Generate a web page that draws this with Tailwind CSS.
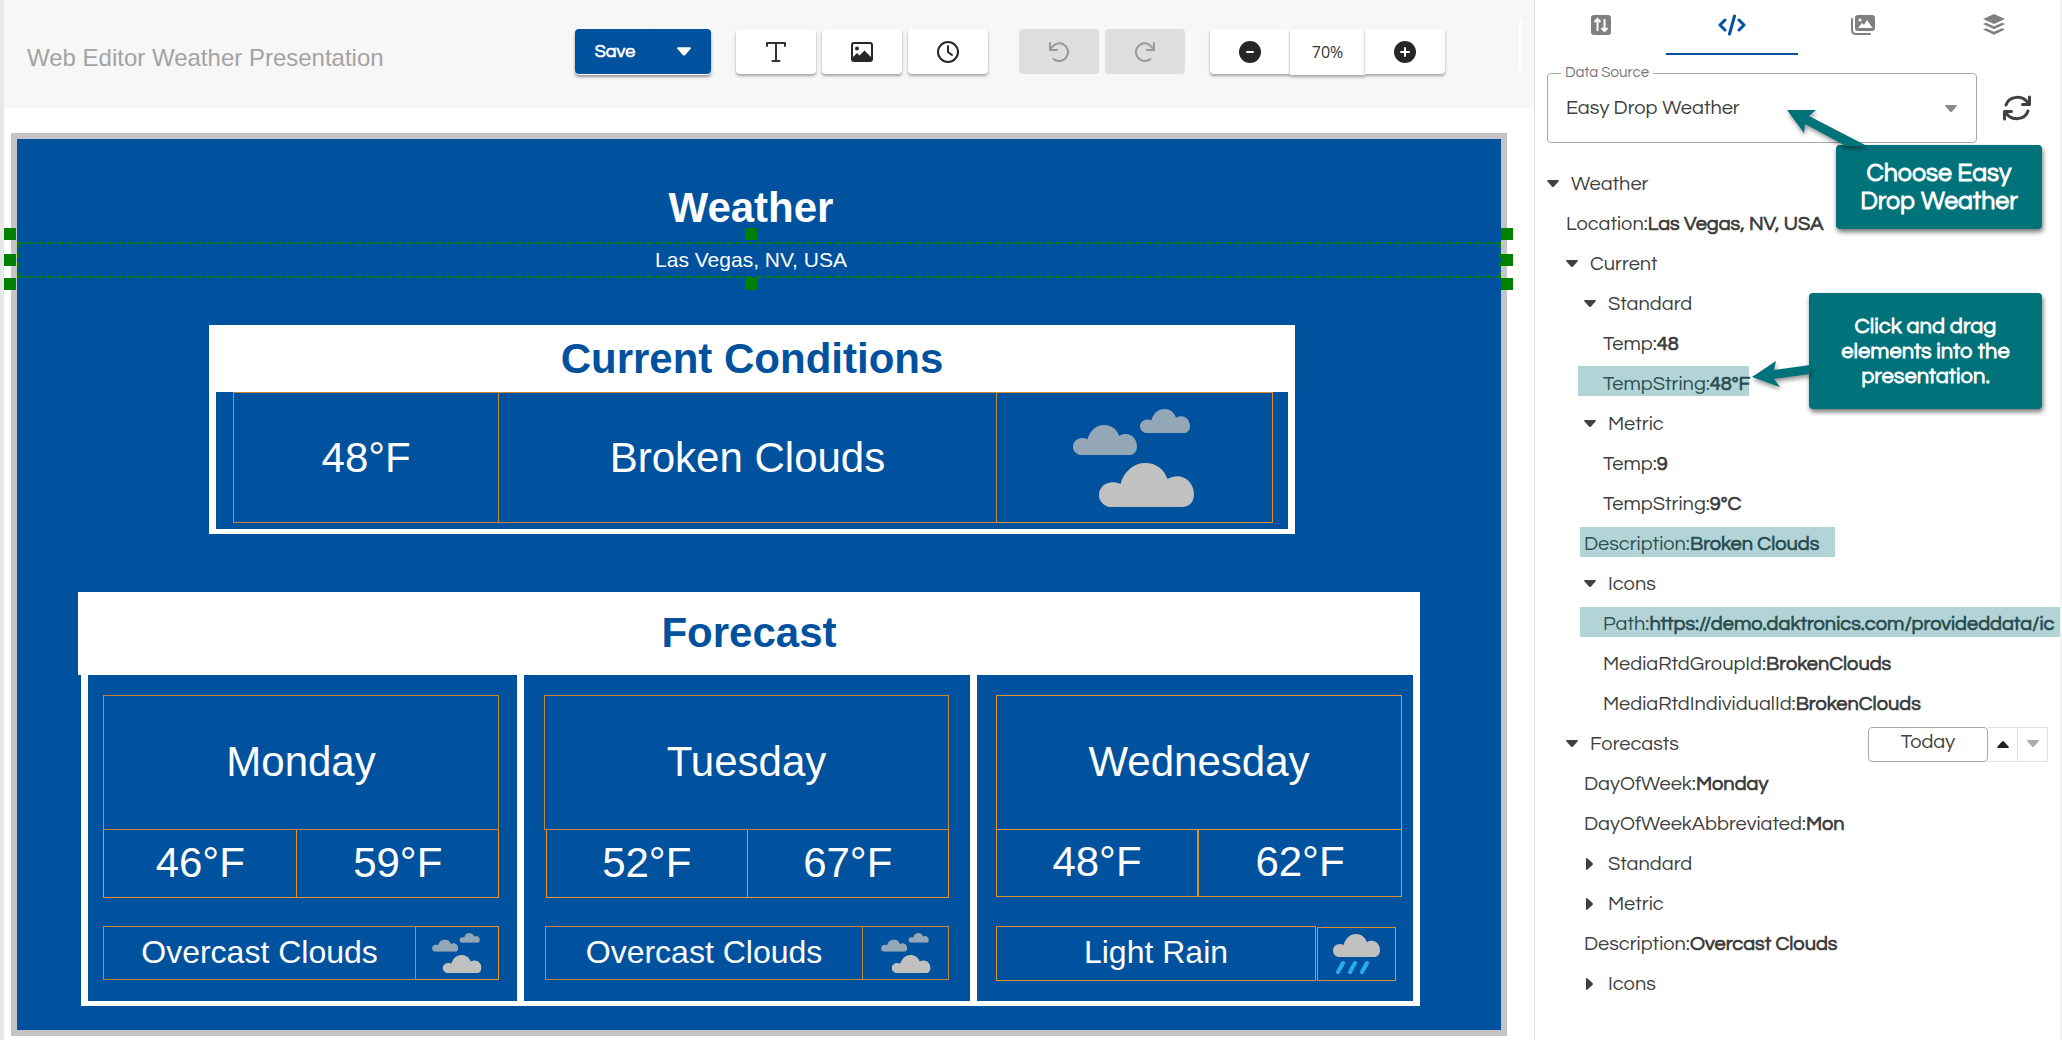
<!DOCTYPE html>
<html lang="en">
<head>
    <meta charset="UTF-8">
    <meta name="viewport" content="width=device-width, initial-scale=1.0">
    <title>Web Editor Weather Presentation</title>
    <script src="https://cdn.jsdelivr.net/npm/@tailwindcss/browser@4"></script>
</head>
<body class="bg-white text-[#404040] font-['Questrial','Open_Sans',sans-serif]">
    <!-- Shared icons -->
    <svg class="hidden">
        <symbol id="cloud" viewBox="0 0 95 44" preserveAspectRatio="none">
            <path d="M10 44C4 42 0 38 0 32C0 22 11 16 21.5 21C25 8 35 0 46 0C57 0 65 6 68.5 16C82 8 95 18 95 31C95 38 91 44 83 44Z"/>
        </symbol>
        <symbol id="broken-clouds" viewBox="0 0 122 98">
            <use href="#cloud" x="0" y="16" width="64" height="30" fill="#93a7b7"/>
            <use href="#cloud" x="67" y="0" width="50" height="24" fill="#93a7b7"/>
            <use href="#cloud" x="26" y="54" width="95" height="44" fill="#c1c1c1"/>
        </symbol>
        <symbol id="light-rain" viewBox="0 0 47 40">
            <use href="#cloud" x="0" y="0" width="47" height="23" fill="#c1c1c1"/>
            <path d="M10 29L5 38M22 29L17 38M34 29L29 38" stroke="#2baaf2" stroke-width="4" stroke-linecap="round"/>
        </symbol>
        <symbol id="caret-down" viewBox="0 0 12 8">
            <path d="M1 0H11Q12.500 .3 11.500 1.500L7 6.500Q6 7.500 5 6.500L.5 1.500Q-.5 .3 1 0Z"/>
        </symbol>
        <symbol id="caret-right" viewBox="0 0 12 12">
            <path d="M2 1Q2.200 -.5 3.500 .5L8.500 5Q9.500 6 8.500 7L3.500 11.500Q2.200 12.500 2 11Z"/>
        </symbol>
    </svg>

    <div class="flex min-h-screen border-l-4 border-[#e8e8e8]">
        <main class="flex-1 min-w-0">
            <!-- Toolbar -->
            <header class="h-[108px] bg-[#f7f7f7] flex items-start">
                <input type="text" aria-label="Presentation name" value="Web Editor Weather Presentation" class="w-[548px] shrink-0 ml-[23px] mt-10 h-9 text-[24px] text-[#a3a3a3] font-['Liberation_Sans',sans-serif]">
                <div class="flex gap-[25px] mt-[29px]">
                    <div class="flex text-white shadow-[0_2px_3px_rgba(0,0,0,0.4)] rounded">
                        <button class="w-[81px] h-[45px] bg-[#00529f] rounded-l border-r border-[#004a90] font-bold text-[18px]">Save</button>
                        <button aria-label="More save options" class="w-[55px] h-[45px] bg-[#00529f] rounded-r flex items-center justify-center"><svg class="w-3.5 h-2.5 fill-white"><use href="#caret-down"/></svg></button>
                    </div>
                    <div class="flex gap-[6px]">
                        <button aria-label="Add text" class="w-20 h-[45px] bg-white rounded shadow-[0_2px_3px_rgba(0,0,0,0.35)] flex items-center justify-center">
                            <svg viewBox="0 0 20 20" class="w-5 h-5" fill="none" stroke="#333" stroke-width="2" stroke-linecap="round" stroke-linejoin="round"><path d="M1 4V1H19V4M10 1V19M6.500 19H13.500"/></svg>
                        </button>
                        <button aria-label="Add image" class="w-20 h-[45px] bg-white rounded shadow-[0_2px_3px_rgba(0,0,0,0.35)] flex items-center justify-center">
                            <svg viewBox="0 0 22 20" class="w-[22px] h-5"><rect x="1" y="1" width="20" height="18" rx="2" fill="none" stroke="#272727" stroke-width="2"/><circle cx="6" cy="6.500" r="2" fill="#272727"/><path d="M2 18V15L6 11L8.500 13.500L13.500 8.500L20 15V18Z" fill="#272727"/></svg>
                        </button>
                        <button aria-label="Add clock" class="w-20 h-[45px] bg-white rounded shadow-[0_2px_3px_rgba(0,0,0,0.35)] flex items-center justify-center">
                            <svg viewBox="0 0 22 22" class="w-[22px] h-[22px]" fill="none" stroke="#272727" stroke-width="2" stroke-linecap="round" stroke-linejoin="round"><circle cx="11" cy="11" r="10"/><path d="M11 5V11L15 14"/></svg>
                        </button>
                    </div>
                    <div class="flex gap-[6px] ml-[6px]">
                        <button disabled aria-label="Undo" class="w-20 h-[45px] bg-[#dedede] rounded flex items-center justify-center">
                            <svg viewBox="0 0 20 20" class="w-5 h-5" fill="none" stroke="#999" stroke-width="2" stroke-linecap="round" stroke-linejoin="round"><path d="M1 1V8H8M1.500 7.500C4 3 7 1 11 1.200A8.900 8.900 0 1 1 4.500 17"/></svg>
                        </button>
                        <button disabled aria-label="Redo" class="w-20 h-[45px] bg-[#dedede] rounded flex items-center justify-center">
                            <svg viewBox="0 0 20 20" class="w-5 h-5" fill="none" stroke="#999" stroke-width="2" stroke-linecap="round" stroke-linejoin="round"><path d="M19 1V8H12M18.500 7.500C16 3 13 1 9 1.200A8.900 8.900 0 1 0 15.500 17"/></svg>
                        </button>
                    </div>
                    <div class="flex">
                        <button aria-label="Zoom out" class="w-20 h-[45px] bg-white rounded-l shadow-[0_2px_3px_rgba(0,0,0,0.35)] flex items-center justify-center">
                            <svg viewBox="0 0 22 22" class="w-[22px] h-[22px]"><circle cx="11" cy="11" r="11" fill="#272727"/><path d="M8 11H14" stroke="#fff" stroke-width="2" stroke-linecap="round"/></svg>
                        </button>
                        <output class="w-[75px] h-[46px] bg-white shadow-[0_2px_3px_rgba(0,0,0,0.35)] flex items-center justify-center text-[16px] text-[#333] font-['Open_Sans',sans-serif]">70%</output>
                        <button aria-label="Zoom in" class="w-20 h-[45px] bg-white rounded-r shadow-[0_2px_3px_rgba(0,0,0,0.35)] flex items-center justify-center">
                            <svg viewBox="0 0 22 22" class="w-[22px] h-[22px]"><circle cx="11" cy="11" r="11" fill="#272727"/><path d="M7 11H15M11 7V15" stroke="#fff" stroke-width="2" stroke-linecap="round"/></svg>
                        </button>
                    </div>
                </div>
                <div class="ml-auto mr-3 mt-5 w-[3px] h-[50px] bg-white"></div>
            </header>

            <!-- Slide -->
            <section class="mt-[25px] ml-[7px] mr-[27px] mb-[5px] border-6 border-[#c4c4c4] bg-[#00529f] text-white text-[42px] leading-[48px] text-center font-['Liberation_Sans',sans-serif]">
                <h1 class="pt-[45px] pr-4 font-bold">Weather</h1>

                <!-- Selected text box with its resize handles -->
                <div class="relative mt-[10px] h-9 pr-4 border-2 border-dashed border-[#008000] text-[21px] leading-8">
                    Las Vegas, NV, USA
                    <i class="absolute -left-[15px] -top-4 w-3 h-3 bg-[#008000]"></i>
                    <i class="absolute -left-[15px] top-[10px] w-3 h-3 bg-[#008000]"></i>
                    <i class="absolute -left-[15px] -bottom-[14px] w-3 h-3 bg-[#008000]"></i>
                    <i class="absolute left-[726px] -top-4 w-3 h-3 bg-[#008000]"></i>
                    <i class="absolute left-[726px] -bottom-[14px] w-3 h-3 bg-[#008000]"></i>
                    <i class="absolute -right-[14px] -top-4 w-3 h-3 bg-[#008000]"></i>
                    <i class="absolute -right-[14px] top-[10px] w-3 h-3 bg-[#008000]"></i>
                    <i class="absolute -right-[14px] -bottom-[14px] w-3 h-3 bg-[#008000]"></i>
                </div>

                <!-- Current conditions -->
                <div class="mt-[47px] ml-[192px] mr-[206px]">
                    <h2 class="h-[67px] bg-white text-[#00529f] font-bold leading-[67px]">Current Conditions</h2>
                    <div class="border-x-7 border-b-5 border-white pl-[17px] pr-[15px] pb-[6px] grid grid-cols-[266fr_497fr_276fr] leading-[129px]">
                        <div class="h-[131px] border border-[#c4873a]">48°F</div>
                        <div class="h-[131px] border-y border-r border-[#c4873a]">Broken Clouds</div>
                        <div class="h-[131px] border-y border-r border-[#d98f35] flex items-center justify-center"><svg class="w-[122px] h-[98px]"><use href="#broken-clouds"/></svg></div>
                    </div>
                </div>

                <!-- Forecast -->
                <div class="mt-[58px] ml-[61px] mr-[81px] pb-6">
                    <h2 class="h-[83px] bg-white text-[#00529f] font-bold leading-[82px]">Forecast</h2>
                    <div class="ml-[3px] border-x-7 border-b-5 border-white grid grid-cols-[429fr_453fr_443fr]">
                        <div class="pt-5 pb-5 pl-[15px] pr-[18px]">
                            <div class="h-[135px] border border-[#c4873a] leading-[132px]">Monday</div>
                            <div class="grid grid-cols-[194fr_201fr] leading-[66px]">
                                <div class="h-[68px] border-x border-b border-[#e8942c]">46°F</div>
                                <div class="h-[68px] border-r border-b border-[#e8942c]">59°F</div>
                            </div>
                            <div class="mt-7 flex text-[32px] leading-[50px]">
                                <div class="flex-1 h-[54px] border border-[#c4873a]">Overcast Clouds</div>
                                <div class="w-[83px] h-[54px] border-y border-r border-[#e8942c] flex items-center justify-center"><svg class="w-[50px] h-10"><use href="#broken-clouds"/></svg></div>
                            </div>
                        </div>
                        <div class="border-l-7 border-white pt-5 pb-5 pl-5 pr-[21px]">
                            <div class="h-[135px] border border-[#c4873a] leading-[132px]">Tuesday</div>
                            <div class="grid grid-cols-2 ml-0.5 leading-[66px]">
                                <div class="h-[68px] border-x border-b border-[#e8942c]">52°F</div>
                                <div class="h-[68px] border-r border-b border-[#e8942c]">67°F</div>
                            </div>
                            <div class="mt-7 ml-px flex text-[32px] leading-[50px]">
                                <div class="flex-1 h-[54px] border border-[#c4873a]">Overcast Clouds</div>
                                <div class="w-[86px] h-[54px] border-y border-r border-[#c4873a] flex items-center justify-center"><svg class="w-[50px] h-10"><use href="#broken-clouds"/></svg></div>
                            </div>
                        </div>
                        <div class="border-l-7 border-white pt-5 pb-5 pl-[19px] pr-[11px]">
                            <div class="h-[135px] border border-[#e8942c] leading-[132px]">Wednesday</div>
                            <div class="grid grid-cols-2 leading-[64px]">
                                <div class="h-[67px] border-l border-r-2 border-b border-[#d98f35]">48°F</div>
                                <div class="h-[67px] border-r border-b border-[#d98f35]">62°F</div>
                            </div>
                            <div class="mt-[29px] pr-[6px] gap-px flex text-[32px] leading-[50px]">
                                <div class="flex-1 h-[55px] border border-[#d98f35]">Light Rain</div>
                                <div class="w-[79px] h-[54px] mt-px border border-[#d98f35] flex items-center justify-center"><svg class="w-[47px] h-10"><use href="#light-rain"/></svg></div>
                            </div>
                        </div>
                    </div>
                </div>
            </section>
        </main>

        <!-- Data sidebar -->
        <aside class="relative w-[528px] shrink-0 overflow-hidden border-l border-r-2 border-l-[#e4e4e4] border-r-[#f3f3f3] text-[20px]">
            <nav class="flex h-[55px]">
                <button aria-label="Properties" class="flex-1 pb-[6px] flex items-center justify-center">
                    <svg viewBox="0 0 20 20" class="w-5 h-5"><rect width="20" height="20" rx="3" fill="#808080"/><path d="M6.500 16V5M3.500 7L6.500 4L9.500 7M13.500 4V15M10.500 13L13.500 16L16.500 13" fill="none" stroke="#fff" stroke-width="2"/></svg>
                </button>
                <button aria-label="Data" class="flex-1 pb-1 border-b-2 border-[#00529f] flex items-center justify-center">
                    <svg viewBox="0 0 28 22" class="w-7 h-[22px]" fill="none" stroke="#00529f" stroke-width="3" stroke-linecap="round" stroke-linejoin="round"><path d="M7 6L2 11L7 16M21 6L26 11L21 16M16.500 2L11.500 20"/></svg>
                </button>
                <button aria-label="Media" class="flex-1 pb-[6px] flex items-center justify-center">
                    <svg viewBox="0 0 24 20" class="w-6 h-5"><path d="M1 4V15Q1 19 5 19H19" fill="none" stroke="#808080" stroke-width="2" stroke-linecap="round"/><rect x="4" width="20" height="16" rx="3" fill="#808080"/><circle cx="9" cy="5" r="1.500" fill="#fff"/><path d="M7 13L11 8L13 10L16 5L21.500 13Z" fill="#fff"/></svg>
                </button>
                <button aria-label="Layers" class="flex-1 pb-[6px] flex items-center justify-center">
                    <svg viewBox="0 0 22 21" class="w-[22px] h-[21px]" fill="#808080"><path d="M11 0L22 5L11 10L0 5ZM0 10L3 8.700L11 12.200L19 8.700L22 10L11 15.200ZM0 15.500L3 14.200L11 17.700L19 14.200L22 15.500L11 20.700Z"/></svg>
                </button>
            </nav>

            <div class="flex items-center mt-[18px] pl-3">
                <div class="relative flex-1 max-w-[430px] h-[70px]">
                    <label for="dataSource" class="absolute left-[14px] -top-[10px] px-1 bg-white text-[15px] leading-5 text-[#777]">Data Source</label>
                    <select id="dataSource" class="w-full h-full appearance-none rounded border border-[#a8a8a8] pl-[18px] bg-transparent">
                        <option>Easy Drop Weather</option>
                    </select>
                    <svg class="absolute right-5 top-8 w-3 h-2 fill-[#8a8a8a] pointer-events-none"><use href="#caret-down"/></svg>
                </div>
                <button aria-label="Refresh" class="ml-[26px]">
                    <svg viewBox="0 0 28 26" class="w-7 h-[26px]" fill="none" stroke="#404040" stroke-width="3" stroke-linecap="round" stroke-linejoin="round"><path d="M3 10C6 1 20 -1 25.500 9M26.500 2V9.500H19.500M25 16C22 25 8 27 2.500 17M1.500 24V16.500H8.500"/></svg>
                </button>
            </div>

            <ul class="mt-[21px] pl-3 leading-10 whitespace-nowrap">
                <li>
                    <button class="h-10 flex items-center gap-3"><svg class="w-3 h-2 fill-[#404040]"><use href="#caret-down"/></svg>Weather</button>
                    <ul class="pl-[19px]">
                        <li class="h-10">Location:<b>Las Vegas, NV, USA</b></li>
                        <li>
                            <button class="h-10 flex items-center gap-3"><svg class="w-3 h-2 fill-[#404040]"><use href="#caret-down"/></svg>Current</button>
                            <ul class="pl-[18px]">
                                <li>
                                    <button class="h-10 flex items-center gap-3"><svg class="w-3 h-2 fill-[#404040]"><use href="#caret-down"/></svg>Standard</button>
                                    <ul class="pl-[19px]">
                                        <li class="h-10">Temp:<b>48</b></li>
                                        <li class="relative h-10">TempString:<b>48°F</b><i class="absolute -left-[25px] top-[2px] w-[171px] h-[30px] bg-[#00727a]/30"></i></li>
                                    </ul>
                                </li>
                                <li>
                                    <button class="h-10 flex items-center gap-3"><svg class="w-3 h-2 fill-[#404040]"><use href="#caret-down"/></svg>Metric</button>
                                    <ul class="pl-[19px]">
                                        <li class="h-10">Temp:<b>9</b></li>
                                        <li class="h-10">TempString:<b>9°C</b></li>
                                    </ul>
                                </li>
                                <li class="relative h-10">Description:<b>Broken Clouds</b><i class="absolute -left-1 top-[3px] w-[255px] h-[30px] bg-[#00727a]/30"></i></li>
                                <li>
                                    <button class="h-10 flex items-center gap-3"><svg class="w-3 h-2 fill-[#404040]"><use href="#caret-down"/></svg>Icons</button>
                                    <ul class="pl-[19px]">
                                        <li class="relative h-10">Path:<b>https://demo.daktronics.com/provideddata/ic</b><i class="absolute -left-[23px] right-0 top-[3px] h-[30px] bg-[#00727a]/30"></i></li>
                                        <li class="h-10">MediaRtdGroupId:<b>BrokenClouds</b></li>
                                        <li class="h-10">MediaRtdIndividualId:<b>BrokenClouds</b></li>
                                    </ul>
                                </li>
                            </ul>
                        </li>
                        <li>
                            <div class="flex items-center pr-3">
                                <button class="h-10 flex items-center gap-3"><svg class="w-3 h-2 fill-[#404040]"><use href="#caret-down"/></svg>Forecasts</button>
                                <input type="text" aria-label="Forecast day" value="Today" readonly class="ml-auto w-[120px] h-[35px] pb-1 rounded border border-[#a8a8a8] text-center">
                                <button aria-label="Next day" class="w-[30px] h-[35px] border-y border-r border-[#e2e2e2] flex items-center justify-center"><svg class="w-3 h-2 fill-[#222] rotate-180"><use href="#caret-down"/></svg></button>
                                <button aria-label="Previous day" disabled class="w-[30px] h-[35px] border-y border-r border-[#e2e2e2] flex items-center justify-center"><svg class="w-3 h-2 fill-[#aaa]"><use href="#caret-down"/></svg></button>
                            </div>
                            <ul class="pl-[18px]">
                                <li class="h-10">DayOfWeek:<b>Monday</b></li>
                                <li class="h-10">DayOfWeekAbbreviated:<b>Mon</b></li>
                                <li><button class="h-10 flex items-center gap-3"><svg class="w-3 h-3 fill-[#404040]"><use href="#caret-right"/></svg>Standard</button></li>
                                <li><button class="h-10 flex items-center gap-3"><svg class="w-3 h-3 fill-[#404040]"><use href="#caret-right"/></svg>Metric</button></li>
                                <li class="h-10">Description:<b>Overcast Clouds</b></li>
                                <li><button class="h-10 flex items-center gap-3"><svg class="w-3 h-3 fill-[#404040]"><use href="#caret-right"/></svg>Icons</button></li>
                            </ul>
                        </li>
                    </ul>
                </li>
            </ul>

            <!-- Callouts -->
            <div class="absolute right-[18px] top-[145px] w-[206px] h-[84px] rounded bg-[#00727a] text-white font-bold text-[25px] leading-7 flex items-center justify-center text-center shadow-[1px_3px_5px_rgba(0,0,0,0.55)]">
                Choose Easy<br>Drop Weather
                <svg viewBox="0 0 80 36" class="absolute -left-[49px] -top-[35px] w-20 h-9 fill-[#00727a] drop-shadow-[1px_3px_2px_rgba(0,0,0,0.4)]"><path d="M0 0L29 0L22 6L80 36H59L18 14L17 23Z"/></svg>
            </div>
            <div class="absolute right-[18px] top-[293px] w-[233px] h-[116px] rounded bg-[#00727a] text-white font-bold text-[22px] leading-[25px] flex items-center justify-center text-center shadow-[1px_3px_5px_rgba(0,0,0,0.55)]">
                Click and drag<br>elements into the<br>presentation.
                <svg viewBox="0 0 58 27" class="absolute -left-[57px] top-[68px] w-[58px] h-[27px] fill-[#00727a] drop-shadow-[1px_3px_2px_rgba(0,0,0,0.4)]"><path d="M0 16L24 0L22 9L58 4V13L22 18L28 26Z"/></svg>
            </div>
        </aside>
    </div>
</body>
</html>
